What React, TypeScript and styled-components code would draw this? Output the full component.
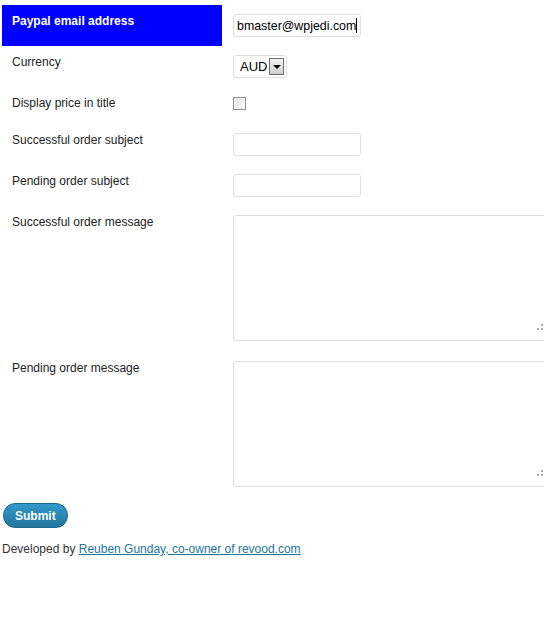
import React from 'react';
import styled, { createGlobalStyle } from 'styled-components';

const GlobalStyle = createGlobalStyle`
  html, body {
    margin: 0;
    padding: 0;
    background: #fff;
    overflow: hidden;
  }
  body {
    font-family: "Liberation Sans", Arial, sans-serif;
    font-size: 12px;
    color: #333;
  }
`;

const StyledPageWrap = styled.div`
  padding: 5px 0 0 2px;
  overflow: hidden;
`;

const StyledFormTable = styled.div`
  display: flex;
  flex-direction: column;
`;

const StyledRow = styled.div`
  display: grid;
  grid-template-columns: 220px 1fr;
  align-items: start;
`;

const StyledLabelCell = styled.div<{ $highlight?: boolean }>`
  box-sizing: border-box;
  align-self: stretch;
  padding: 9px 10px 11px;
  line-height: 14px;
  color: ${(props) => (props.$highlight ? '#fff' : '#222')};
  background: ${(props) => (props.$highlight ? '#0000ff' : 'transparent')};
  font-weight: ${(props) => (props.$highlight ? 'bold' : 'normal')};
`;

const StyledFieldCell = styled.div`
  min-width: 0;
  padding: 9px 0 9px 11px;
`;

const StyledTextInputWrap = styled.span`
  position: relative;
  display: inline-block;
`;

const StyledTextInput = styled.input`
  box-sizing: border-box;
  width: 128px;
  height: 23px;
  margin: 0;
  padding: 0 3px;
  border: 1px solid #dfdfdf;
  border-radius: 3px;
  background: #fff;
  font-family: "Liberation Sans", Arial, sans-serif;
  font-size: 12.4px;
  color: #000;
  outline: none;
  display: block;
`;

// 스크린샷에 찍힌 텍스트 커서
const StyledCaret = styled.span`
  position: absolute;
  left: 123px;
  top: 4px;
  width: 1px;
  height: 15px;
  background: #000;
`;

const StyledSelectBox = styled.div`
  box-sizing: border-box;
  display: flex;
  align-items: center;
  gap: 2px;
  width: 54px;
  height: 23px;
  padding: 0 2px 0 6px;
  border: 1px solid #dfdfdf;
  border-radius: 3px;
  background: #fff;
  font-size: 13px;
  color: #000;
`;

const StyledSelectButton = styled.span`
  box-sizing: border-box;
  display: flex;
  align-items: center;
  justify-content: center;
  width: 17px;
  height: 17px;
  border: 1px solid #707070;
  background: linear-gradient(#f2f2f2, #cfcfcf);
`;

const StyledArrow = styled.span`
  width: 0;
  height: 0;
  border-left: 4px solid transparent;
  border-right: 4px solid transparent;
  border-top: 4px solid #000;
  margin-top: 1px;
`;

const StyledCheckbox = styled.input`
  appearance: none;
  box-sizing: border-box;
  display: block;
  width: 13px;
  height: 13px;
  margin: 1px 0 5px;
  border: 1px solid #8f8f8f;
  background: linear-gradient(135deg, #dcdcdc, #ffffff);
  box-shadow: inset 0 0 0 1px #f4f4f4;
`;

const StyledTextAreaWrap = styled.div`
  position: relative;
  width: 320px;
`;

const StyledTextArea = styled.textarea`
  box-sizing: border-box;
  display: block;
  width: 320px;
  height: 126px;
  margin: 0 0 2px;
  border: 1px solid #dfdfdf;
  border-radius: 3px;
  resize: none;
  outline: none;
  font-family: "Liberation Sans", Arial, sans-serif;
  font-size: 12px;
`;

const StyledGrip = styled.span`
  position: absolute;
  left: 303px;
  bottom: 10px;
  width: 7px;
  height: 7px;
  background:
    linear-gradient(#a8a8a8, #a8a8a8) 5px 0 / 2px 2px no-repeat,
    linear-gradient(#a8a8a8, #a8a8a8) 1px 4px / 2px 2px no-repeat,
    linear-gradient(#a8a8a8, #a8a8a8) 5px 4px / 2px 2px no-repeat;
`;

const StyledSubmitButton = styled.button`
  display: block;
  margin: 5px 0 0 1px;
  height: 25px;
  padding: 0 11px;
  border: 1px solid #1d6a91;
  border-radius: 12px;
  background: linear-gradient(#3499cc, #21759b);
  color: #fff;
  font-family: "Liberation Sans", Arial, sans-serif;
  font-size: 12px;
  font-weight: bold;
  cursor: pointer;
`;

const StyledFooter = styled.p`
  margin: 14px 0 0;
  line-height: 14px;
  color: #333;
`;

const StyledFooterLink = styled.a`
  color: #21759b;
  text-decoration: underline;
`;

interface TextAreaFieldProps {
  label: string;
}

const TextAreaRow = ({ label }: TextAreaFieldProps) => {
  return (
    <StyledRow>
      <StyledLabelCell>{ label }</StyledLabelCell>
      <StyledFieldCell>
        <StyledTextAreaWrap>
          <StyledTextArea />
          <StyledGrip />
        </StyledTextAreaWrap>
      </StyledFieldCell>
    </StyledRow>
  );
};

const App = () => {
  return (
    <>
      <GlobalStyle />
      <StyledPageWrap>
        <StyledFormTable>
          <StyledRow>
            <StyledLabelCell $highlight>Paypal email address</StyledLabelCell>
            <StyledFieldCell>
              <StyledTextInputWrap>
                <StyledTextInput defaultValue='bmaster@wpjedi.com' />
                <StyledCaret />
              </StyledTextInputWrap>
            </StyledFieldCell>
          </StyledRow>
          <StyledRow>
            <StyledLabelCell>Currency</StyledLabelCell>
            <StyledFieldCell>
              <StyledSelectBox>
                <span>AUD</span>
                <StyledSelectButton>
                  <StyledArrow />
                </StyledSelectButton>
              </StyledSelectBox>
            </StyledFieldCell>
          </StyledRow>
          <StyledRow>
            <StyledLabelCell>Display price in title</StyledLabelCell>
            <StyledFieldCell>
              <StyledCheckbox type='checkbox' />
            </StyledFieldCell>
          </StyledRow>
          <StyledRow>
            <StyledLabelCell>Successful order subject</StyledLabelCell>
            <StyledFieldCell>
              <StyledTextInput />
            </StyledFieldCell>
          </StyledRow>
          <StyledRow>
            <StyledLabelCell>Pending order subject</StyledLabelCell>
            <StyledFieldCell>
              <StyledTextInput />
            </StyledFieldCell>
          </StyledRow>
          <TextAreaRow label='Successful order message' />
          <TextAreaRow label='Pending order message' />
        </StyledFormTable>
        <StyledSubmitButton type='button'>Submit</StyledSubmitButton>
        <StyledFooter>
          Developed by <StyledFooterLink href='#'>Reuben Gunday, co-owner of revood.com</StyledFooterLink>
        </StyledFooter>
      </StyledPageWrap>
    </>
  );
};

export default App;
